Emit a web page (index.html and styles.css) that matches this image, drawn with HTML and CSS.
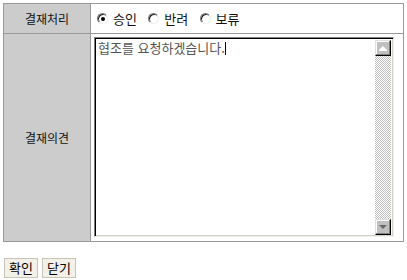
FILE: index.html
```html
<!DOCTYPE html>
<html lang="ko">
<head>
    <meta charset="UTF-8">
    <title>결재처리</title>
    <link rel="stylesheet" href="styles.css">
</head>
<body>

    <table class="approval">
        <tr class="row-status">
            <th>결재처리</th>
            <td>
                <label class="radio"><span class="dot checked"></span>승인</label>
                <label class="radio"><span class="dot"></span>반려</label>
                <label class="radio"><span class="dot"></span>보류</label>
            </td>
        </tr>
        <tr class="row-opinion">
            <th>결재의견</th>
            <td>
                <div class="memo">
                    <div class="memo-text">협조를 요청하겠습니다.<span class="caret"></span></div>
                    <div class="scrollbar">
                        <div class="arrow up"><span></span></div>
                        <div class="track"></div>
                        <div class="arrow down"><span></span></div>
                    </div>
                </div>
            </td>
        </tr>
    </table>

    <div class="actions">
        <button type="button">확인</button>
        <button type="button">닫기</button>
    </div>

</body>
</html>
```

FILE: styles.css
```css
body {
    margin: 0;
    padding: 3px;
    font-family: "Noto Sans CJK KR", "DejaVu Sans", sans-serif;
    font-size: 12px;
    color: #111;
    background: #fff;
}
.approval {
    width: 401px;
    border-collapse: collapse;
}
.approval th, .approval td {
    border: 1px solid #999;
    padding: 0;
}
.approval th {
    width: 86px;
    background-color: #cccccc;
    font-weight: normal;
    text-align: center;
}
.row-status {
    height: 30px;
}
.row-status td {
    padding-left: 6px;
}
.row-status .radio {
    font-size: 13px;
}
.row-opinion {
    height: 208px;
}
.row-opinion td {
    padding: 3px 9px 4px 3px;
}
.radio {
    display: inline-flex;
    align-items: center;
    gap: 5px;
    margin-right: 8px;
}
.dot {
    width: 11px;
    height: 11px;
    border-radius: 50%;
    box-sizing: border-box;
    border: 1px solid;
    border-color: #777 #eee #eee #777;
    box-shadow: inset 1px 1px 0 #222;
    background: #fff;
    position: relative;
}
.dot.checked::after {
    content: "";
    position: absolute;
    left: 3px;
    top: 3px;
    width: 4px;
    height: 4px;
    border-radius: 50%;
    background: #000;
}
.memo {
    display: flex;
    height: 200px;
    box-sizing: border-box;
    border: 1px solid;
    border-color: #808080 #f0f0f0 #f0f0f0 #808080;
    box-shadow: inset 1px 1px 0 #000, inset -1px -1px 0 #d4d0c8;
    padding: 2px 2px 1px 2px;
}
.memo-text {
    flex: 1;
    color: #555;
    font-size: 13px;
    line-height: 15px;
    padding-left: 1px;
}
.caret {
    display: inline-block;
    width: 1px;
    height: 13px;
    background: #000;
    vertical-align: -2px;
}
.scrollbar {
    width: 16px;
    display: flex;
    flex-direction: column;
}
.track {
    flex: 1;
    background-color: #fff;
    background-image: repeating-conic-gradient(#c0c0c0 0 25%, #fff 0 50%);
    background-size: 2px 2px;
}
.arrow {
    height: 16px;
    box-sizing: border-box;
    background: #c0c0c0;
    border: 1px solid;
    border-color: #dfdfdf #000 #000 #dfdfdf;
    box-shadow: inset -1px -1px 0 #808080, inset 1px 1px 0 #fff;
    display: flex;
    align-items: center;
    justify-content: center;
}
.arrow span {
    width: 0;
    height: 0;
    border-left: 4px solid transparent;
    border-right: 4px solid transparent;
}
.arrow.up span {
    border-bottom: 4px solid #fff;
    box-shadow: 0 1px 0 #fff;
}
.arrow.down span {
    border-top: 4px solid #6a6a6a;
}
.actions {
    display: flex;
    gap: 4px;
    margin-top: 16px;
    padding-left: 1px;
}
.actions button {
    font-family: inherit;
    font-size: 13px;
    line-height: 16px;
    padding: 1px 4px;
    background-color: #f2f0e8;
    border: 1px solid #c9c5b5;
    color: #000;
}
```
